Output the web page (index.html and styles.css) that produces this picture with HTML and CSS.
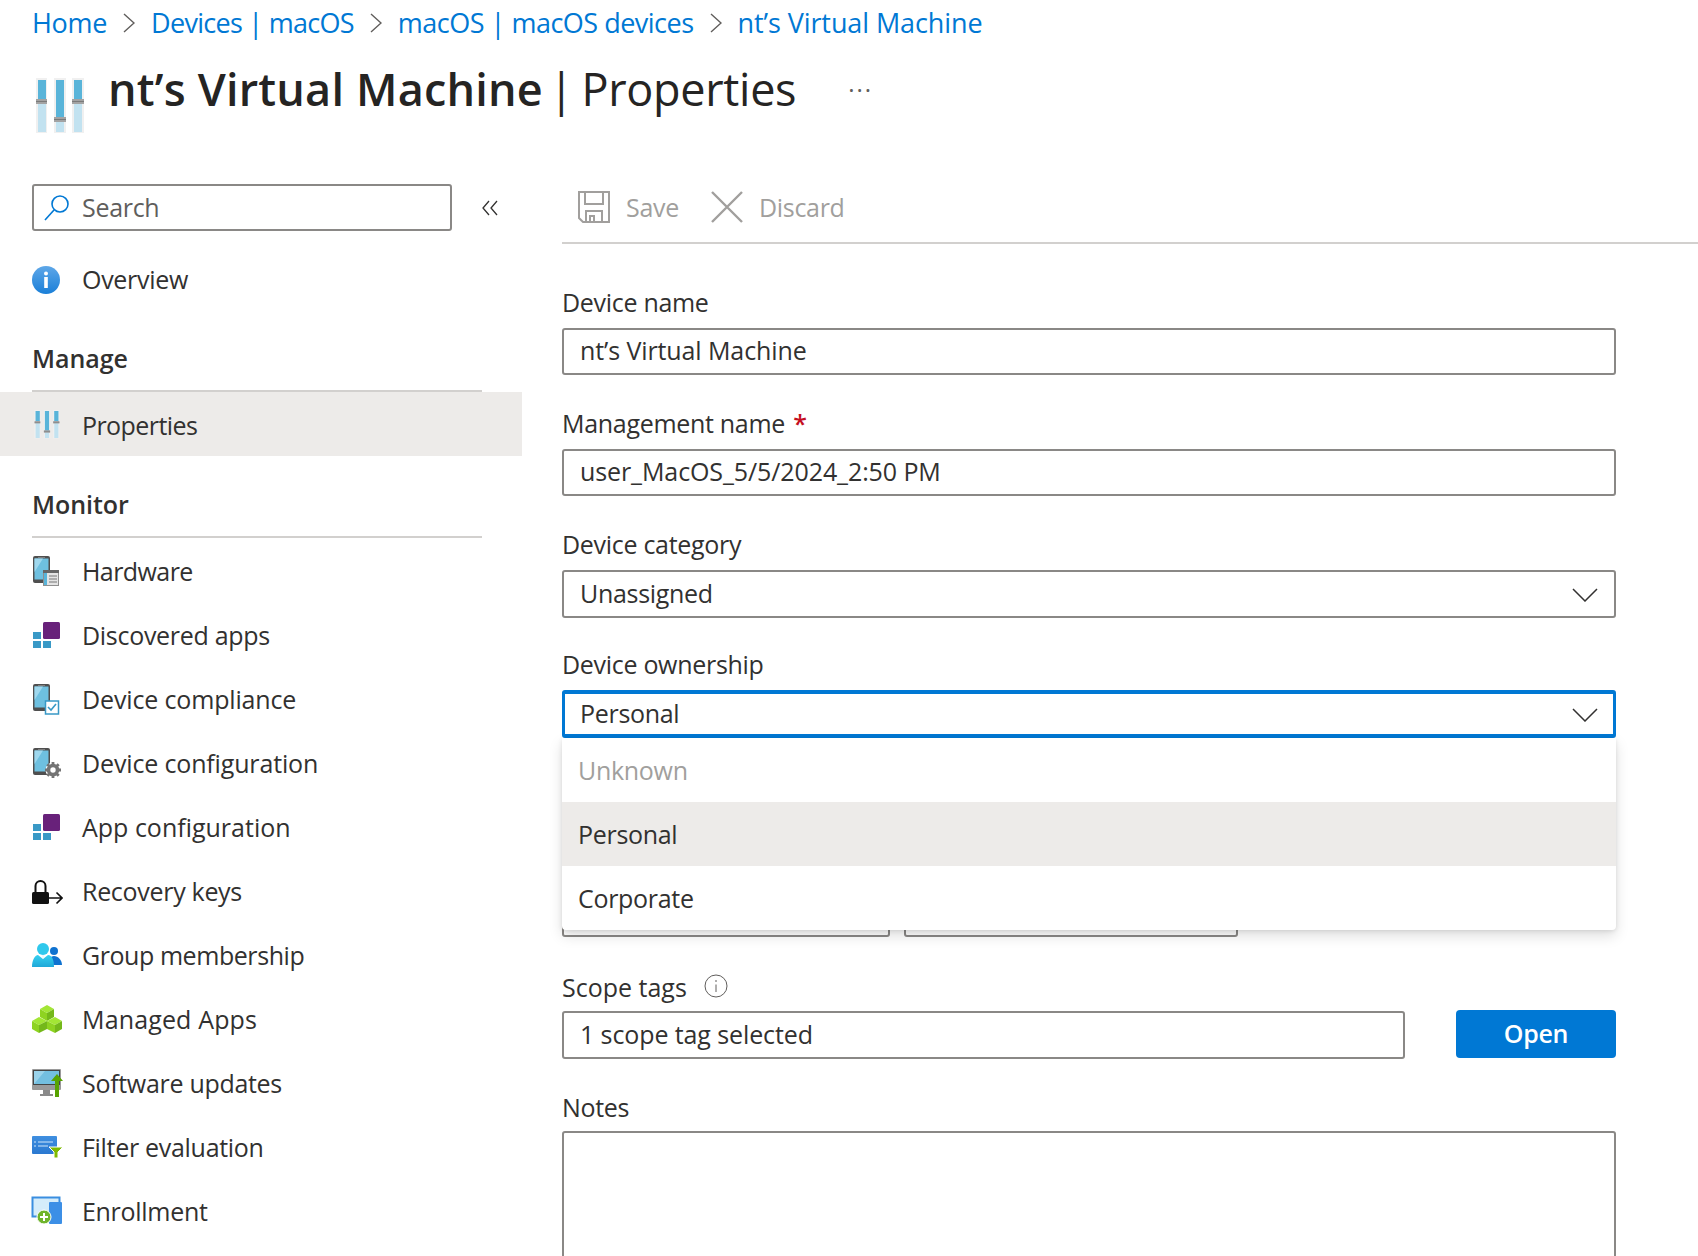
FILE: index.html
```html
<!DOCTYPE html>
<html lang="en">
<head>
<meta charset="utf-8">
<title>nt's Virtual Machine | Properties</title>
<link rel="stylesheet" href="styles.css">
</head>
<body>
<svg class="defs" width="0" height="0" aria-hidden="true">
  <defs>
    <linearGradient id="blueV" x1="0" y1="0" x2="0" y2="1"><stop offset="0" stop-color="#5ea7e8"/><stop offset="1" stop-color="#1a7fd8"/></linearGradient>
    <linearGradient id="cardV" x1="0" y1="0" x2="0" y2="1"><stop offset="0" stop-color="#3f8fe0"/><stop offset="1" stop-color="#2a78d0"/></linearGradient>
    <linearGradient id="peopleV" x1="0" y1="0" x2="0" y2="1"><stop offset="0" stop-color="#35d0f0"/><stop offset="1" stop-color="#1fa8d8"/></linearGradient>
    <symbol id="sliders" viewBox="0 0 48 56">
      <path fill="#f0f0f0" d="M0 0h11v55H0zM18 0h12v55H18zM36 0h12v55H36z"/>
      <path fill="#c2e2f0" d="M2 2h8v52H2zM20 2h8v52h-8zM38 2h8v52h-8z"/>
      <path fill="#59b4d9" d="M2 2h8v20H2zM20 2h8v38h-8zM38 2h8v20h-8z"/>
      <path fill="#a3a3a3" d="M0 21h11v5H0zM18 39h12v5H18zM36 21h12v5H36z"/>
      <path fill="#7a7a7a" d="M0 23h11v1H0zM18 41h12v1H18zM36 23h12v1H36z"/>
    </symbol>
    <symbol id="apps" viewBox="0 0 32 32">
      <rect x="12" y="2" width="17" height="17" rx="1.500" fill="#68217a"/>
      <path fill="#3999c6" d="M2 12h8v7H2zM2 21h8v7H2zM12 21h8v7h-8z"/>
    </symbol>
    <symbol id="phone" viewBox="0 0 32 32">
      <rect x="2" y="0" width="17" height="27" rx="2" fill="#4f4f4f"/>
      <rect x="3.500" y="2.500" width="14" height="21" fill="#6ec0e0"/>
      <path fill="#9fd8ee" d="M3.500 16 12 2.500H3.500z"/>
      <path fill="#8d8d8d" d="M7 1h7v.8H7z"/>
    </symbol>
  </defs>
</svg>

<nav class="crumbs">
  <a class="crumb">Home</a>
  <svg class="crumb-sep" viewBox="0 0 12 20"><path d="M1 1l10 9-10 9"/></svg>
  <a class="crumb crumb-tight">Devices | macOS</a>
  <svg class="crumb-sep" viewBox="0 0 12 20"><path d="M1 1l10 9-10 9"/></svg>
  <a class="crumb crumb-mid">macOS | macOS devices</a>
  <svg class="crumb-sep" viewBox="0 0 12 20"><path d="M1 1l10 9-10 9"/></svg>
  <a class="crumb crumb-last">nt’s Virtual Machine</a>
</nav>

<header class="head">
  <svg class="head-icon"><use href="#sliders"/></svg>
  <h1 class="title"><b class="title-main">nt’s Virtual Machine</b><span class="title-bar">|</span><span class="title-sub">Properties</span></h1>
  <span class="more">···</span>
</header>

<div class="body">
  <aside class="side">
    <div class="search-row">
      <div class="search">
        <svg class="search-icon" viewBox="0 0 26 28"><circle cx="16" cy="10" r="8"/><path d="M10 16 1 26"/></svg>
        <span class="search-txt">Search</span>
      </div>
      <svg class="collapse" viewBox="0 0 16 16"><path d="M7 1 1 8l6 7M15 1 9 8l6 7"/></svg>
    </div>

    <a class="row">
      <svg class="ico" viewBox="0 0 32 32"><circle cx="15" cy="16" r="14" fill="url(#blueV)"/><circle cx="15" cy="9.500" r="2" fill="#fff"/><rect x="13.200" y="13" width="3.600" height="11" fill="#fff"/></svg>
      <span class="row-txt">Overview</span>
    </a>

    <h2 class="sec sec-first">Manage</h2>
    <a class="row row-on">
      <svg class="ico ico-sl"><use href="#sliders"/></svg>
      <span class="row-txt t-narrow">Properties</span>
    </a>

    <h2 class="sec">Monitor</h2>
    <div class="list">
      <a class="row">
        <svg class="ico" viewBox="0 0 32 32"><use href="#phone"/><rect x="12.500" y="14.500" width="15" height="15" fill="#e4e4e4" stroke="#8f8f8f"/><rect x="12" y="14" width="16" height="3" fill="#666"/><path stroke="#777" d="M18 20h8M18 23h8M18 26h8"/><path fill="#59b4d9" d="M13 17h3v12h-3z"/></svg>
        <span class="row-txt t-narrow">Hardware</span>
      </a>
      <a class="row">
        <svg class="ico"><use href="#apps"/></svg>
        <span class="row-txt">Discovered apps</span>
      </a>
      <a class="row">
        <svg class="ico" viewBox="0 0 32 32"><use href="#phone"/><rect x="14.500" y="17" width="13" height="13" fill="#fff" stroke="#3999c6" stroke-width="1.500"/><path d="M17 23l3 3 5-6" fill="none" stroke="#3999c6" stroke-width="1.600"/></svg>
        <span class="row-txt t-semi">Device compliance</span>
      </a>
      <a class="row">
        <svg class="ico" viewBox="0 0 32 32"><use href="#phone"/><circle cx="22" cy="22" r="7.500" fill="#fff"/><circle cx="22" cy="22" r="4.500" fill="none" stroke="#737373" stroke-width="3.600"/><path stroke="#737373" stroke-width="2.800" d="M22 14v3M22 27v3M14 22h3M27 22h3M16.300 16.300l2 2M25.700 25.700l2 2M27.700 16.300l-2 2M18.300 25.700l-2 2"/></svg>
        <span class="row-txt t-semi">Device configuration</span>
      </a>
      <a class="row">
        <svg class="ico"><use href="#apps"/></svg>
        <span class="row-txt t-wide">App configuration</span>
      </a>
      <a class="row">
        <svg class="ico" viewBox="0 0 32 32"><rect x="1" y="16" width="17" height="12" rx="1.500" fill="#111"/><path d="M4.500 17V10a5 5 0 0 1 10 0v7" fill="none" stroke="#111" stroke-width="2"/><path d="M18 22h13M25.500 16.500 31 22l-5.500 5.500" fill="none" stroke="#111" stroke-width="1.600"/></svg>
        <span class="row-txt">Recovery keys</span>
      </a>
      <a class="row">
        <svg class="ico" viewBox="0 0 32 32"><circle cx="23" cy="11" r="4" fill="#0f72d0"/><path fill="#0f72d0" d="M17 25c0-5 2-9 6-9s8 4 8 9z"/><circle cx="12" cy="9" r="6" fill="#2fc8ec"/><path fill="url(#peopleV)" d="M1 27c0-7 3-12 6-12l5 4 5-4c4 0 6 5 6 12z"/><path fill="#e9f9fd" d="M10.500 15h3L12 19z"/></svg>
        <span class="row-txt t-narrow-s">Group membership</span>
      </a>
      <a class="row">
        <svg class="ico" viewBox="0 0 32 32"><path fill="#a3e635" d="M16 1l7 4-7 4-7-4z"/><path fill="#8ed321" d="M9 5l7 4v8l-7-4z"/><path fill="#74b81a" d="M23 5l-7 4v8l7-4z"/><path fill="#a3e635" d="M8 13l8 4-8 4-7-4z"/><path fill="#8ed321" d="M1 17l7 4v8l-7-4z"/><path fill="#74b81a" d="M16 17l-8 4v8l8-4z"/><path fill="#a3e635" d="M24 13l7 4-7 4-8-4z"/><path fill="#8ed321" d="M16 17l8 4v8l-8-4z"/><path fill="#74b81a" d="M31 17l-7 4v8l7-4z"/></svg>
        <span class="row-txt t-wider">Managed Apps</span>
      </a>
      <a class="row">
        <svg class="ico" viewBox="0 0 32 32"><rect x="1" y="1" width="29" height="21" rx="1" fill="#9a9a9a"/><rect x="2.500" y="2.500" width="26" height="14" fill="#73bfe0" stroke="#444"/><path fill="#9ad3eb" d="M3 16 14 3H3z"/><path fill="#8a8a8a" d="M12 22h7v4h3v2H9v-2h3z"/><path fill="#57a300" d="M24 29V13h-4l6-7 6 7h-4v16z"/></svg>
        <span class="row-txt">Software updates</span>
      </a>
      <a class="row">
        <svg class="ico" viewBox="0 0 32 32"><rect x="1" y="4" width="25" height="18" rx="1" fill="url(#cardV)"/><path stroke="#cfe6fa" d="M3 10h2M7 10h15M3 14h2M7 14h10"/><path fill="#7fba00" stroke="#fff" d="M18 15h14l-5 5v6h-4v-6z"/></svg>
        <span class="row-txt">Filter evaluation</span>
      </a>
      <a class="row">
        <svg class="ico" viewBox="0 0 32 32"><rect x="1.500" y="1.500" width="27" height="19" fill="#d5ecfa" stroke="#3a8ee0" stroke-width="2"/><rect x="18" y="6" width="13" height="22" rx="1" fill="#3c8fe6"/><circle cx="13" cy="21" r="7" fill="#6fb42c" stroke="#fff"/><path stroke="#fff" stroke-width="2" d="M13 17v8M9 21h8"/></svg>
        <span class="row-txt">Enrollment</span>
      </a>
    </div>
  </aside>

  <main class="main">
    <div class="toolbar">
      <svg class="tool-ico" viewBox="0 0 32 32"><path d="M1 1h30v30H5l-4-4z"/><path d="M7 1v12h18V1M8 31V20h16v11M12 31v-6h4v6"/></svg>
      <span class="tool-txt">Save</span>
      <svg class="tool-ico tool-x" viewBox="0 0 32 32"><path d="M1 1l30 30M31 1 1 31"/></svg>
      <span class="tool-txt">Discard</span>
    </div>

    <form class="form">
      <div class="field">
        <div class="label">Device name</div>
        <div class="box t-input">nt’s Virtual Machine</div>
      </div>
      <div class="field">
        <div class="label">Management name <span class="req">*</span></div>
        <div class="box t-input">user_MacOS_5/5/2024_2:50 PM</div>
      </div>
      <div class="field field-cat">
        <div class="label">Device category</div>
        <div class="box box-sel tall">Unassigned
          <svg class="chev" viewBox="0 0 26 14"><path d="M1 1l12 12L25 1"/></svg>
        </div>
      </div>
      <div class="field field-open">
        <div class="label">Device ownership</div>
        <div class="box box-sel box-focus tall">Personal
          <svg class="chev" viewBox="0 0 26 14"><path d="M1 1l12 12L25 1"/></svg>
        </div>
        <ul class="menu">
          <li class="opt opt-off">Unknown</li>
          <li class="opt opt-on">Personal</li>
          <li class="opt">Corporate</li>
        </ul>
      </div>
      <div class="pair">
        <div class="box pair-a"></div>
        <div class="box pair-b"></div>
      </div>
      <div class="scope">
        <div class="label label-scope">Scope tags
          <svg class="info" viewBox="0 0 24 24"><circle cx="12" cy="12" r="11"/><path d="M12 10.500V18M12 6v2"/></svg>
        </div>
        <div class="scope-row">
          <div class="box tall scope-box t-input">1 scope tag selected</div>
          <button class="open" type="button">Open</button>
        </div>
      </div>
      <div class="notes">
        <div class="label">Notes</div>
        <div class="box area"></div>
      </div>
    </form>
  </main>
</div>
</body>
</html>
```
FILE: styles.css
```css
* { box-sizing: border-box; }
html, body { margin: 0; padding: 0; overflow: hidden; }
body {
  width: 1698px;
  height: 1256px;
  background: #fff;
  color: #323130;
  font-family: "Open Sans", "Noto Sans", "Liberation Sans", sans-serif;
  font-size: 25px;
  letter-spacing: -0.3px;
}
.defs { position: absolute; }

.crumbs {
  height: 44px;
  padding-left: 32px;
  display: flex;
  align-items: center;
  font-size: 27px;
}
.crumb { color: #0078d4; }
.crumb-tight { letter-spacing: -0.73px; }
.crumb-mid { letter-spacing: -0.5px; }
.crumb-last { letter-spacing: -0.1px; }
.crumb-sep {
  width: 12px;
  height: 20px;
  margin: 2px 16px 0 16px;
  fill: none;
  stroke: #605e5c;
  stroke-width: 1.4;
}

.head {
  height: 140px;
  padding-left: 36px;
  display: flex;
  align-items: flex-start;
}
.head-icon { width: 48px; height: 56px; margin-top: 34px; }
.title {
  margin: 0 0 0 24px;
  font-size: 45px;
  line-height: 90px;
  font-weight: 400;
  color: #252423;
  letter-spacing: -0.3px;
  white-space: nowrap;
}
.title-main { font-weight: 600; letter-spacing: 0.2px; }
.title-bar { margin: 0 8px 0 6px; }
.more { margin: 29px 0 0 52px; font-size: 24px; color: #605e5c; letter-spacing: 2px; }

.body { display: flex; }

.side { width: 522px; flex: none; }
.search-row { display: flex; align-items: center; padding-left: 32px; margin-bottom: 17px; }
.search {
  width: 420px;
  height: 47px;
  border: 2px solid #8a8886;
  border-radius: 3px;
  display: flex;
  align-items: center;
  padding-left: 11px;
  color: #605e5c;
}
.search-txt { padding-bottom: 2px; }
.search-icon { width: 26px; height: 28px; margin-right: 12px; margin-left: -1px; fill: none; stroke: #0078d4; stroke-width: 1.6; }
.collapse { width: 16px; height: 16px; margin-left: 30px; fill: none; stroke: #323130; stroke-width: 1.3; }

.row {
  height: 64px;
  padding-left: 31px;
  display: flex;
  align-items: center;
  gap: 19px;
  white-space: nowrap;
}
.row-txt { padding-bottom: 2px; }
.row-on { background: #edebe9; }
.row-on .row-txt { padding-bottom: 0; padding-top: 2px; }
.t-narrow { letter-spacing: -0.57px; }
.t-narrow-s { letter-spacing: -0.44px; }
.t-semi { letter-spacing: -0.15px; }
.t-wide { letter-spacing: 0; }
.t-wider { letter-spacing: 0.15px; }
.t-input { letter-spacing: -0.1px; }
.ico { width: 32px; height: 32px; flex: none; }
.ico-sl { width: 26px; height: 29px; margin: 0 3px; }

.sec {
  margin: 0 40px 0 32px;
  padding-top: 18px;
  line-height: 60px;
  padding-bottom: 2px;
  font-size: 25px;
  font-weight: 600;
  letter-spacing: -0.05px;
  border-bottom: 2px solid #d2d0ce;
}
.sec-first { padding-top: 16px; }
.list { margin-top: 2px; }

.main { flex: 1; min-width: 0; margin-left: 40px; }
.toolbar {
  height: 60px;
  display: flex;
  align-items: center;
  padding: 0 0 12px 16px;
  border-bottom: 2px solid #d2d0ce;
}
.tool-ico { width: 32px; height: 32px; fill: none; stroke: #a19f9d; stroke-width: 2; }
.tool-x { margin-left: 32px; stroke-width: 2.4; }
.tool-txt { color: #a19f9d; margin-left: 16px; }

.form { width: 1054px; padding-top: 40px; }
.field { position: relative; margin-bottom: 30px; }
.field-cat { margin-bottom: 28px; }
.label { line-height: 36px; margin-bottom: 8px; height: 36px; white-space: nowrap; }
.req { color: #c50f1f; font-weight: 600; margin-left: 2px; }
.box {
  height: 47px;
  border: 2px solid #8a8886;
  border-radius: 3px;
  padding: 0 0 3px 16px;
  display: flex;
  align-items: center;
  justify-content: space-between;
  white-space: nowrap;
}
.tall { height: 48px; padding-bottom: 2px; }
.box-sel { padding-right: 16px; }
.box-focus { border-width: 4px 3px; padding-left: 15px; padding-right: 15px; border-color: #0078d4; }
.chev { width: 26px; height: 14px; margin-top: 3px; fill: none; stroke: #323130; stroke-width: 1.5; }

.menu {
  position: absolute;
  left: 0;
  right: 0;
  top: 92px;
  z-index: 2;
  margin: 0;
  padding: 0;
  list-style: none;
  background: #fff;
  border-radius: 0 0 4px 4px;
  box-shadow: 0 6px 14px rgba(0, 0, 0, .13), 0 1px 4px rgba(0, 0, 0, .1);
}
.opt { height: 64px; line-height: 65px; padding-left: 16px; }
.opt-off { color: #a19f9d; }
.opt-on { background: #edebe9; }

.pair { display: flex; gap: 14px; margin-top: 152px; }
.pair-a { width: 328px; }
.pair-b { width: 334px; }

.scope { margin-top: 32px; }
.label-scope { display: flex; align-items: center; gap: 17px; margin-bottom: 6px; letter-spacing: 0; }
.info { width: 24px; height: 24px; fill: none; stroke: #605e5c; stroke-width: 1; margin-top: -2px; }
.scope-row { display: flex; justify-content: space-between; align-items: flex-start; }
.scope-box { width: 843px; }
.open {
  width: 160px;
  height: 48px;
  padding: 0 0 3px;
  margin-top: -1px;
  border: 0;
  border-radius: 4px;
  background: #0078d4;
  color: #fff;
  font: 600 25px "Open Sans", "Noto Sans", sans-serif;
  letter-spacing: -0.3px;
}

.notes { margin-top: 30px; }
.notes .label { margin-bottom: 6px; }
.area { height: 130px; }
```
